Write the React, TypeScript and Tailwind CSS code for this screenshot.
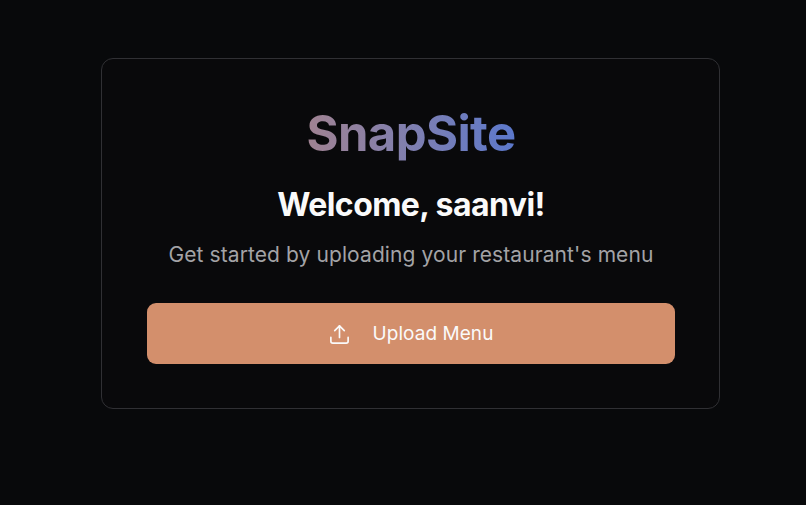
import { Upload } from "lucide-react";

export default function App() {
  return (
    <main className="w-full h-screen overflow-hidden bg-[#08090b] pt-[58px] pl-[101px] font-['Inter',sans-serif]">
      <div className="w-[619px] h-[351px] rounded-[12px] border border-[#303034] bg-[#09090b] pl-[45px] pr-[44px] pt-[45px] flex flex-col items-center">
        <h1 className="h-[60px] text-[49px] leading-[60px] font-bold tracking-[-0.6px] text-transparent bg-clip-text bg-gradient-to-r from-[#a08291] to-[#5b78cc]">
          SnapSite
        </h1>
        <h2 className="mt-[21px] text-[32px] leading-[40px] font-bold tracking-[-0.55px] text-[#fafafa]">
          Welcome, saanvi!
        </h2>
        <p className="mt-[16px] text-[21px] leading-[28px] tracking-[0.09px] text-[#a3a3a6]">
          Get started by uploading your restaurant's menu
        </p>
        <button className="mt-[34px] w-full h-[61px] pt-px pr-px rounded-[9px] bg-[#d38f6c] text-[#fafafa] text-[19px] tracking-[0.05px] font-normal flex items-center justify-center gap-[22px]">
          <Upload size={23} strokeWidth={1.75} />
          Upload Menu
        </button>
      </div>
    </main>
  );
}
